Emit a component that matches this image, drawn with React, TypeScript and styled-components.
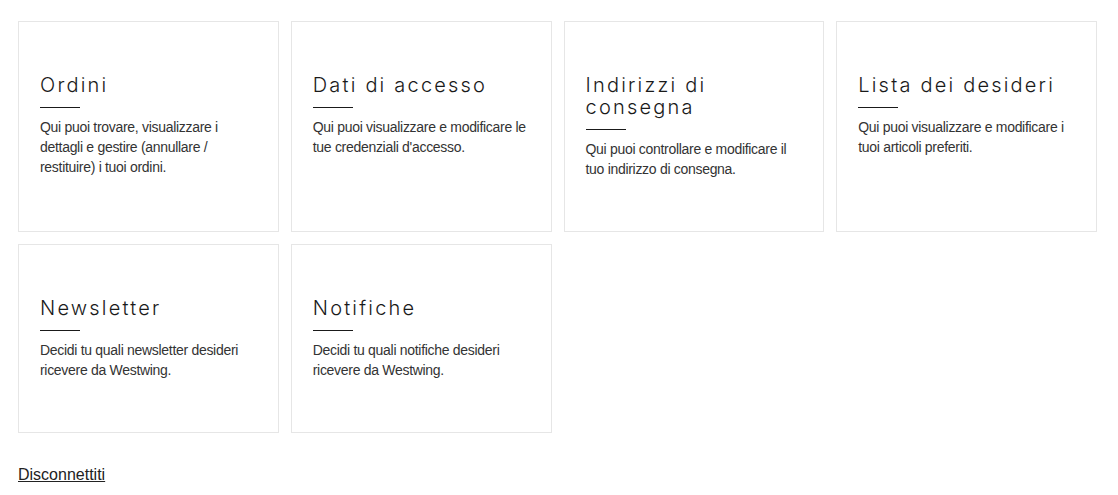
import styled, { createGlobalStyle } from "styled-components";

type Card = {
    title: string,
    text: string
}

const cards: Card[] = [
    { title: "Ordini", text: "Qui puoi trovare, visualizzare i dettagli e gestire (annullare / restituire) i tuoi ordini." },
    { title: "Dati di accesso", text: "Qui puoi visualizzare e modificare le tue credenziali d'accesso." },
    { title: "Indirizzi di consegna", text: "Qui puoi controllare e modificare il tuo indirizzo di consegna." },
    { title: "Lista dei desideri", text: "Qui puoi visualizzare e modificare i tuoi articoli preferiti." },
    { title: "Newsletter", text: "Decidi tu quali newsletter desideri ricevere da Westwing." },
    { title: "Notifiche", text: "Decidi tu quali notifiche desideri ricevere da Westwing." },
]

const GlobalStyle = createGlobalStyle`
    body {
        margin: 0;
        background: #fff;
        font-family: "Liberation Sans", Arial, sans-serif;
        color: #222;
    }
`

const App = () => {
    return (
        <Page>
            <GlobalStyle/>
            <Grid>
                {cards.map(card => (
                    <Tile key={card.title}>
                        <Title>{card.title}</Title>
                        <Rule/>
                        <Text>{card.text}</Text>
                    </Tile>
                ))}
            </Grid>
            <Logout href="#">Disconnettiti</Logout>
        </Page>
    );
}

const Page = styled.div`
    padding: 21px 18px 0;
`

const Grid = styled.div`
    display: grid;
    grid-template-columns: repeat(4, 1fr);
    gap: 12px;
    width: 1079px;
`

const Tile = styled.div`
    border: 1px solid #e6e6e6;
    padding: 51.5px 21px 52.5px;
    min-width: 0;
`

const Title = styled.h2`
    margin: 0;
    font-family: "Inter", "Liberation Sans", sans-serif;
    font-weight: 300;
    font-size: 20px;
    line-height: 22px;
    letter-spacing: 2.2px;
    color: #1a1a1a;
`

const Rule = styled.div`
    width: 40px;
    height: 1px;
    background: #1a1a1a;
    margin: 11px 0 9px;
`

const Text = styled.p`
    margin: 0;
    font-size: 14px;
    line-height: 20px;
    letter-spacing: -0.3px;
    color: #333;
`

const Logout = styled.a`
    display: inline-block;
    margin-top: 33px;
    font-size: 16px;
    line-height: 18px;
    color: #222;
    text-decoration: underline;
`

export default App;
